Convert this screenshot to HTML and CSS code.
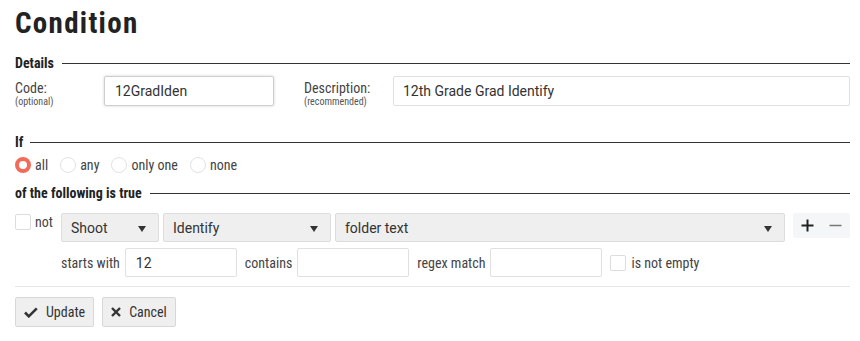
FILE: index.html
```html
<!DOCTYPE html>
<html>
<head>
    <title>Condition</title>
    <link rel="stylesheet" href="styles.css">
</head>
<body>

<div id="page">
    <h1 class="pageTitle">Condition</h1>

    <div class="sectionHead detailsHead">Details</div>
    <div class="detailsRow">
        <label class="fieldLabel codeLabel">Code:<small>(optional)</small></label>
        <input class="textInput codeInput" value="12GradIden" />
        <label class="fieldLabel descLabel">Description:<small>(recommended)</small></label>
        <input class="textInput descInput" value="12th Grade Grad Identify" />
    </div>

    <div class="sectionHead ifHead">If</div>
    <div class="radioRow">
        <label class="radio"><span class="radioDot checked"></span>all</label>
        <label class="radio"><span class="radioDot"></span>any</label>
        <label class="radio"><span class="radioDot"></span>only one</label>
        <label class="radio"><span class="radioDot"></span>none</label>
    </div>

    <div class="sectionHead trueHead">of the following is true</div>
    <div class="ruleRow">
        <label class="notBox"><span class="checkBox"></span>not</label>
        <div class="select shootSelect">Shoot<span class="caret"></span></div>
        <div class="select identifySelect">Identify<span class="caret"></span></div>
        <div class="select folderSelect">folder text<span class="caret"></span></div>
        <div class="plusMinus">
            <button class="iconBtn plusBtn">
                <svg width="13" height="13" viewBox="0 0 13 13"><path d="M6.5 0.5v12M0.5 6.5h12" stroke="#222" stroke-width="2"/></svg>
            </button>
            <button class="iconBtn minusBtn">
                <svg width="13" height="13" viewBox="0 0 13 13"><path d="M0.5 6.5h12" stroke="#777" stroke-width="1.5"/></svg>
            </button>
        </div>
    </div>
    <div class="matchRow">
        <span class="matchLabel">starts with</span>
        <input class="textInput matchInput" value="12" />
        <span class="matchLabel">contains</span>
        <input class="textInput matchInput" value="" />
        <span class="matchLabel">regex match</span>
        <input class="textInput matchInput" value="" />
        <label class="emptyBox"><span class="checkBox"></span>is not empty</label>
    </div>

    <div class="divider"></div>

    <div class="actions">
        <button class="actionBtn">
            <svg width="14" height="11" viewBox="0 0 14 11"><path d="M1 5.5l3.8 3.8l8-8" fill="none" stroke="#333" stroke-width="2.6"/></svg>
            Update
        </button>
        <button class="actionBtn">
            <svg width="10" height="10" viewBox="0 0 10 10"><path d="M1 1l8 8M9 1l-8 8" fill="none" stroke="#333" stroke-width="2.4"/></svg>
            Cancel
        </button>
    </div>
</div>

</body>
</html>
```

FILE: styles.css
```css
body {
    margin: 0;
    background: #ffffff;
    color: #333333;
    font-family: "Roboto Condensed", Roboto, "Liberation Sans", sans-serif;
    font-size: 14px;
}

#page {
    padding: 0 10px 0 15px;
}

.pageTitle {
    margin: 6px 0 0 0;
    font-size: 29px;
    line-height: 34px;
    font-weight: bold;
    letter-spacing: 1.3px;
    color: #222222;
}

/*---------section headings-------------*/
.sectionHead {
    display: flex;
    align-items: center;
    gap: 8px;
    font-weight: bold;
    font-size: 14px;
    line-height: 16px;
    color: #222222;
}
.sectionHead::after {
    content: "";
    flex-grow: 1;
    border-top: 1px solid #333333;
}
.detailsHead { margin-top: 15px; }
.ifHead { margin-top: 26px; }
.ifHead::after { margin-left: -1px; }
.trueHead { margin-top: 12px; }

/*---------details-------------*/
.detailsRow {
    display: flex;
    align-items: flex-start;
    margin-top: 5px;
}

.fieldLabel {
    display: flex;
    flex-direction: column;
    padding-top: 4px;
    line-height: 16px;
    color: #444444;
}
.fieldLabel small {
    font-size: 10px;
    line-height: 12px;
    color: #555555;
}
.codeLabel { width: 89px; }
.descLabel { width: 89px; margin-left: 30px; }

.textInput {
    box-sizing: border-box;
    height: 30px;
    border: 1px solid #e0e0e0;
    border-radius: 2px;
    padding: 0 10px;
    font-family: Roboto, "Liberation Sans", sans-serif;
    font-size: 14px;
    color: #333333;
    background: #ffffff;
    outline: none;
}
.codeInput {
    width: 170px;
    border-color: #cfcfcf;
    box-shadow: 0 0 3px rgba(0, 0, 0, 0.18);
}
.descInput {
    flex-grow: 1;
    padding-left: 9px;
}

/*---------radios-------------*/
.radioRow {
    display: flex;
    align-items: center;
    margin-top: 7px;
    height: 16px;
}
.radio {
    display: flex;
    align-items: center;
    gap: 4px;
    margin-right: 12px;
    color: #444444;
}
.radioDot {
    box-sizing: border-box;
    width: 16px;
    height: 16px;
    border-radius: 50%;
    border: 1px solid #e2e2e2;
    background: #ffffff;
}
.radioDot.checked {
    border: 4px solid #f26a5a;
}

/*---------rule-------------*/
.ruleRow {
    display: flex;
    align-items: flex-start;
    margin-top: 12px;
}

.checkBox {
    box-sizing: border-box;
    display: inline-block;
    width: 16px;
    height: 16px;
    border: 1px solid #dcdcdc;
    border-radius: 2px;
    background: #ffffff;
}

.notBox {
    display: flex;
    align-items: flex-start;
    gap: 4px;
    width: 46px;
    line-height: 16px;
    padding-top: 1px;
    color: #444444;
}

.select {
    box-sizing: border-box;
    display: flex;
    align-items: center;
    justify-content: space-between;
    height: 29px;
    padding: 0 12px 0 9px;
    background: #efefef;
    border: 1px solid #dddddd;
    border-radius: 2px;
    font-family: Roboto, "Liberation Sans", sans-serif;
    color: #333333;
}
.shootSelect { width: 98px; }
.identifySelect { width: 168px; margin-left: 4px; }
.folderSelect { flex-grow: 1; margin-left: 4px; }

.caret {
    width: 0;
    height: 0;
    border-left: 4px solid transparent;
    border-right: 4px solid transparent;
    border-top: 6px solid #333333;
    margin-top: 2px;
}

.plusMinus {
    display: flex;
    margin-left: 8px;
}
.iconBtn {
    width: 28.5px;
    height: 25px;
    border: none;
    background: #f5f6f7;
    padding: 0;
    display: flex;
    align-items: center;
    justify-content: center;
}
.plusBtn { border-radius: 2px 0 0 2px; }
.minusBtn { border-radius: 0 2px 2px 0; }

.matchRow {
    display: flex;
    align-items: center;
    margin-top: 6px;
    padding-left: 46px;
}
.matchLabel {
    margin-right: 5px;
    color: #444444;
}
.matchInput {
    width: 112px;
    height: 29px;
    margin-right: 8px;
}
.emptyBox {
    display: flex;
    align-items: center;
    gap: 5px;
    color: #444444;
}

.divider {
    margin-top: 9px;
    border-top: 1px solid #e6e6e6;
}

/*---------buttons-------------*/
.actions {
    display: flex;
    gap: 8px;
    margin-top: 10px;
}
.actionBtn {
    display: flex;
    align-items: center;
    gap: 8px;
    height: 30px;
    padding: 0 8px;
    background: #efefef;
    border: 1px solid #d8d8d8;
    border-radius: 2px;
    font-family: "Roboto Condensed", Roboto, "Liberation Sans", sans-serif;
    font-size: 14px;
    color: #333333;
}
```
